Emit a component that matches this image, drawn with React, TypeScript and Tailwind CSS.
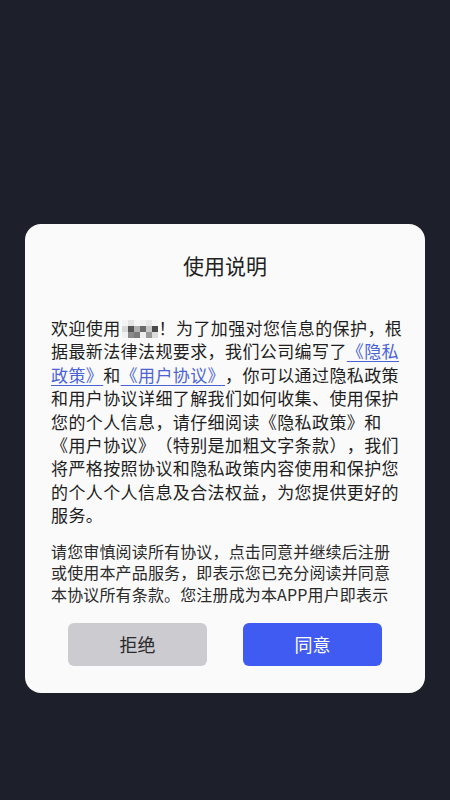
import React from "react";

const cells = [
  "#f4f4f4", "#e4e4e4", "#f6f6f6", "#f2f2f2", "#e8e8e8", "#f6f6f6",
  "#d8d8d8", "#555", "#b0b0b0", "#6a6a6a", "#c8c8c8", "#4a4a4a",
  "#f0f0f0", "#8a8a8a", "#7a7a7a", "#ededed", "#999", "#dcdcdc",
];

function Mosaic() {
  return (
    <span className="inline-grid grid-cols-6 grid-rows-3 w-[36px] h-[18px] align-top mt-[4px] mx-[1px]">
      {cells.map((c, i) => (
        <span key={i} className="block" style={{ backgroundColor: c }} />
      ))}
    </span>
  );
}

function Link({ children }: { children: React.ReactNode }) {
  return <span className="text-[#4b63d6] underline underline-offset-[3px]">{children}</span>;
}

export default function App() {
  return (
    <div
      className="min-h-[800px] bg-[#1d202a] pt-[224px] px-[25px] [text-spacing-trim:space-all]"
      style={{ fontFamily: '"Noto Sans CJK SC", "Noto Sans", sans-serif' }}
    >
      <div className="w-[400px] bg-[#fafafa] rounded-[16px] flex flex-col pt-[27px] pb-[27px]">
        <h1 className="text-center text-[21px] leading-[28px] text-[#222] font-normal">使用说明</h1>

        {/* scrollable agreement text */}
        <div className="mt-[37px] h-[292px] overflow-hidden pl-[26px] text-[#1e1e1e]">
          <div className="text-[17px] leading-[23.4px] tracking-[0.4px] whitespace-nowrap">
            <span className="block">欢迎使用<Mosaic />！为了加强对您信息的保护，根</span>
            <span className="block">据最新法律法规要求，我们公司编写了<Link>《隐私</Link></span>
            <span className="block"><Link>政策》</Link>和<Link>《用户协议》</Link>，你可以通过隐私政策</span>
            <span className="block">和用户协议详细了解我们如何收集、使用保护</span>
            <span className="block">您的个人信息，请仔细阅读《隐私政策》和</span>
            <span className="block">《用户协议》（特别是加粗文字条款），我们</span>
            <span className="block">将严格按照协议和隐私政策内容使用和保护您</span>
            <span className="block">的个人个人信息及合法权益，为您提供更好的</span>
            <span className="block">服务。</span>
          </div>
          <div className="mt-[14px] text-[16px] leading-[21.7px] tracking-[0.15px] whitespace-nowrap text-[#2a2a2a]">
            <span className="block">请您审慎阅读所有协议，点击同意并继续后注册</span>
            <span className="block">或使用本产品服务，即表示您已充分阅读并同意</span>
            <span className="block">本协议所有条款。您注册成为本APP用户即表示</span>
          </div>
        </div>

        <div className="mt-[15px] flex justify-center gap-[36px]">
          <button className="w-[139px] h-[43px] rounded-[6px] bg-[#cbcbd0] text-[18px] text-[#2a2a2a]">拒绝</button>
          <button className="w-[139px] h-[43px] rounded-[6px] bg-[#3f5bf2] text-[18px] text-white">同意</button>
        </div>
      </div>
    </div>
  );
}
